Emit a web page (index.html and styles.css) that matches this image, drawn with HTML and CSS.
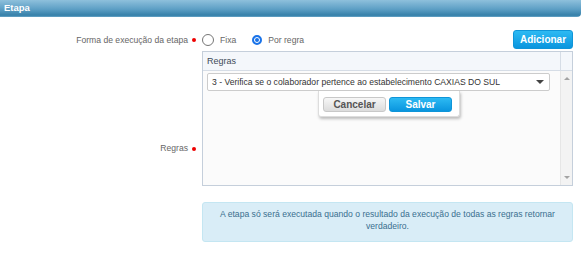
FILE: index.html
```html
<!DOCTYPE html>
<html lang="pt-BR">
<head>
    <meta charset="UTF-8">
    <title>Etapa</title>
    <link rel="stylesheet" href="styles.css">
</head>
<body>
    <div class="panel">
        <div class="panel_head">Etapa</div>
        <div class="panel_body">
            <div class="row row_forma">
                <div class="lbl">Forma de execução da etapa<span class="req"></span></div>
                <div class="field field_forma">
                    <label class="radio"><span class="circle"></span>Fixa</label>
                    <label class="radio checked"><span class="circle"></span>Por regra</label>
                    <button class="btn btn_blue btn_add">Adicionar</button>
                </div>
            </div>

            <div class="row row_regras">
                <div class="lbl lbl_regras">Regras<span class="req"></span></div>
                <div class="field">
                    <div class="grid">
                        <div class="grid_head">
                            <div class="grid_title">Regras</div>
                            <div class="grid_corner"></div>
                        </div>
                        <div class="grid_body">
                            <div class="grid_rows">
                                <div class="select">
                                    <span>3 - Verifica se o colaborador pertence ao estabelecimento CAXIAS DO SUL</span>
                                    <span class="caret"></span>
                                </div>
                                <div class="popup">
                                    <button class="btn btn_gray">Cancelar</button>
                                    <button class="btn btn_blue">Salvar</button>
                                </div>
                            </div>
                            <div class="scroll">
                                <span class="arrow up"></span>
                                <span class="arrow down"></span>
                            </div>
                        </div>
                    </div>
                </div>
            </div>

            <div class="row">
                <div></div>
                <div class="field">
                    <div class="info">A etapa só será executada quando o resultado da execução de todas as regras retornar verdadeiro.</div>
                </div>
            </div>
        </div>
    </div>
</body>
</html>
```

FILE: styles.css
```css
body {
    margin: 0;
    background: #fff;
    font-family: "Liberation Sans", Arial, sans-serif;
    color: #666;
}

.panel_head {
    height: 17px;
    margin-right: 2px;
    border-radius: 0 0 4px 0;
    background: linear-gradient(#8ec0dc, #5c9ec4 55%, #3580a9 90%, #6aa6c8);
    color: #fff;
    font-weight: bold;
    font-size: 9.5px;
    line-height: 16px;
    padding-left: 4px;
}

.panel_body {
    padding: 12px 10px 0 0;
}

.row {
    display: grid;
    grid-template-columns: 198px 1fr;
    column-gap: 4px;
}

.lbl {
    display: flex;
    justify-content: flex-end;
    align-items: center;
    font-size: 8.6px;
    color: #666;
}

.lbl_regras {
    align-items: flex-start;
    padding-top: 92px;
    height: 12px;
}

.req {
    width: 4px;
    height: 4px;
    border-radius: 50%;
    background: #e00;
    margin: 0 2px 0 4px;
}

.lbl_regras .req {
    margin-top: 4px;
}

.field_forma {
    display: flex;
    align-items: center;
    height: 22px;
    font-size: 8.6px;
}

.radio {
    display: flex;
    align-items: center;
    gap: 6px;
    margin-right: 16px;
}

.circle {
    width: 10px;
    height: 10px;
    border: 1px solid #767676;
    border-radius: 50%;
    background: #fff;
}

.radio.checked .circle {
    width: 6px;
    height: 6px;
    border: 2px solid #1a73e8;
    box-shadow: inset 0 0 0 1px #fff;
    background: #1a73e8;
    padding: 0;
}

.btn {
    font-family: "Liberation Sans", Arial, sans-serif;
    font-weight: bold;
    font-size: 10px;
    border-radius: 3px;
    cursor: pointer;
    padding: 0;
}

.btn_blue {
    color: #fff;
    border: 1px solid #0f95d8;
    background: linear-gradient(#2dbaf3, #0a95de);
}

.btn_gray {
    color: #555;
    border: 1px solid #c8c8c8;
    background: linear-gradient(#f7f7f7, #dcdcdc);
}

.btn_add {
    margin-left: auto;
    width: 60px;
    height: 19px;
    margin-bottom: 2px;
}

.grid {
    border: 1px solid #c5cfdb;
    height: 133px;
    display: flex;
    flex-direction: column;
}

.grid_head {
    display: flex;
    height: 18px;
    border-bottom: 1px solid #d6dde6;
    background: #f4f7fb;
}

.grid_title {
    flex: 1;
    font-size: 9px;
    color: #3e4a57;
    line-height: 18px;
    padding-left: 4px;
}

.grid_corner {
    width: 11px;
    border-left: 1px solid #d6dde6;
}

.grid_body {
    flex: 1;
    display: flex;
    background: #fbfbfb;
}

.grid_rows {
    flex: 1;
    position: relative;
    padding: 2px 10px 0 4px;
}

.select {
    display: flex;
    align-items: center;
    height: 16px;
    border: 1px solid #ccc;
    border-radius: 2px;
    background: #fff;
    padding: 0 0 0 4px;
    font-size: 8.6px;
    color: #333;
}

.caret {
    margin-left: auto;
    margin-right: 5px;
    width: 0;
    height: 0;
    border-left: 4px solid transparent;
    border-right: 4px solid transparent;
    border-top: 4px solid #444;
}

.popup {
    position: absolute;
    left: 115px;
    top: 20px;
    width: 132px;
    height: 19px;
    padding: 6px 4px 0;
    background: #fff;
    border: 1px solid #ddd;
    border-top: none;
    border-radius: 0 0 3px 3px;
    box-shadow: 1px 2px 3px rgba(0, 0, 0, 0.25);
    display: flex;
    gap: 3px;
    align-items: flex-start;
}

.popup .btn {
    width: 63px;
    height: 15px;
}

.scroll {
    width: 11px;
    border-left: 1px solid #e6e6e6;
    background: #f3f3f3;
    display: flex;
    flex-direction: column;
    justify-content: space-between;
    align-items: center;
    padding: 6px 0 6px;
}

.arrow {
    width: 0;
    height: 0;
    border-left: 3px solid transparent;
    border-right: 3px solid transparent;
}

.arrow.up {
    border-bottom: 3px solid #a3a3a3;
}

.arrow.down {
    border-top: 3px solid #a3a3a3;
}

.info {
    margin-top: 16px;
    height: 33px;
    border: 1px solid #c4e6f2;
    border-radius: 3px;
    background: #d9edf7;
    color: #3a6f8f;
    font-size: 8.6px;
    text-align: center;
    padding: 5px 8px 0;
    line-height: 12px;
}
```
